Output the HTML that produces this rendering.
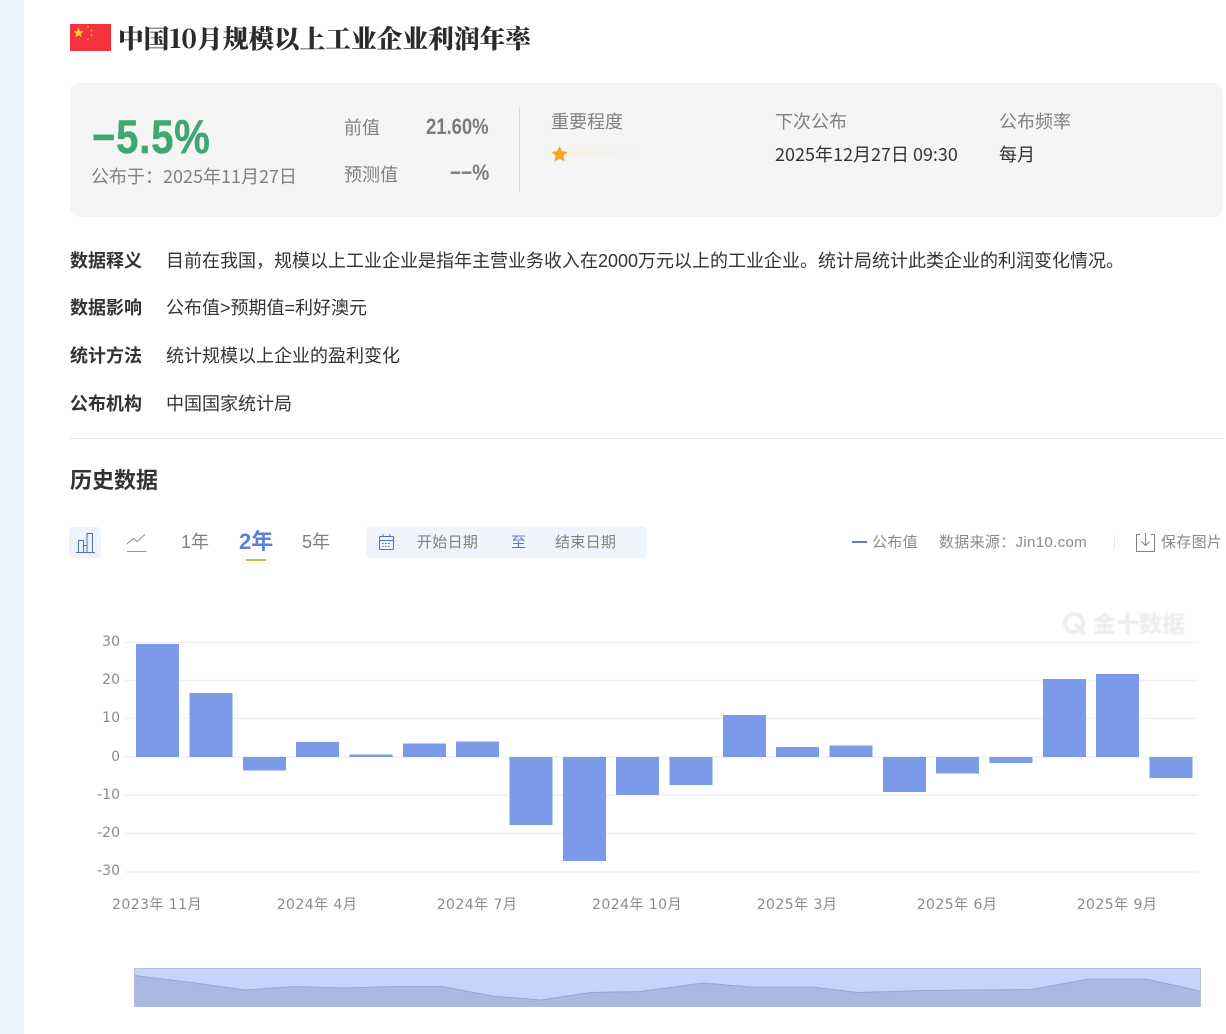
<!DOCTYPE html>
<html lang="zh"><head><meta charset="utf-8"><title>中国10月规模以上工业企业利润年率</title>
<style>
html,body{margin:0;padding:0;background:#fff}
body{width:1226px;height:1034px;position:relative;overflow:hidden;font-family:"Liberation Sans","Noto Sans CJK SC",sans-serif;color:#333}
.a{position:absolute;white-space:nowrap;line-height:1}
.b{font-family:"Noto Sans CJK SC",sans-serif}
.lab{left:70px;font-size:18px;font-weight:700;color:#333;font-family:"Noto Sans CJK SC",sans-serif}
.val{left:166px;font-size:18px;color:#333;font-weight:400;letter-spacing:0}
.g{color:#808080}
.t{font-size:15px;line-height:18px;color:#8a8a90;letter-spacing:.3px}
</style></head><body>
<div class="a" style="left:0;top:0;width:24px;height:1034px;background:#e8f4fa"></div>

<svg class="a" style="left:70px;top:24px" width="41" height="27" viewBox="0 0 41 27"><rect width="41" height="27" fill="#f5333f"/><polygon points="8.500,3.500 9.800,7.200 13.700,7.300 10.600,9.600 11.700,13.400 8.500,11.200 5.300,13.400 6.400,9.600 3.300,7.300 7.200,7.200" fill="#fdd835"/><circle cx="18" cy="3" r="1" fill="#f59e4a"/><circle cx="21.500" cy="6.500" r="1" fill="#f59e4a"/><circle cx="21.500" cy="11" r="1" fill="#f59e4a"/><circle cx="18" cy="15.500" r="1" fill="#f59e4a"/></svg>
<div class="a" style="left:118px;top:24px;font-family:'Noto Serif CJK SC',serif;font-weight:900;font-size:25.700px;line-height:28px;color:#2b2b2b">中国10月规模以上工业企业利润年率</div>

<div class="a" style="left:70px;top:83px;width:1153px;height:134px;background:#f5f5f5;border-radius:10px"></div>
<div class="a" style="left:92px;top:113px;font-size:47px;font-weight:700;color:#3fa772;transform:scaleX(.85);transform-origin:0 0;letter-spacing:1px;-webkit-text-stroke:.5px #3fa772">−5.5%</div>
<div class="a b g" style="left:91px;top:166px;font-size:18px;line-height:20px">公布于：2025年11月27日</div>
<div class="a b g" style="left:344px;top:117px;font-size:18px;line-height:20px">前值</div>
<div class="a" style="right:737px;top:116px;font-size:22px;font-weight:700;color:#7b7b7b;transform:scaleX(.84);transform-origin:100% 0">21.60%</div>
<div class="a b g" style="left:344px;top:164px;font-size:18px;line-height:20px">预测值</div>
<div class="a" style="right:737px;top:162px;font-size:22px;font-weight:700;color:#7b7b7b;transform:scaleX(.87);transform-origin:100% 0">−−%</div>
<div class="a" style="left:519px;top:107px;width:1px;height:85px;background:#d9d9d9"></div>
<div class="a b g" style="left:551px;top:111px;font-size:18px;line-height:20px">重要程度</div>
<div class="a" style="left:559px;top:151px;width:85px;height:5px;background:linear-gradient(90deg,#fbeedd,#f5f5f5)"></div>
<svg class="a" style="left:551px;top:146px" width="17" height="16" viewBox="0 0 17 16"><polygon points="8.500,0 10.900,5.200 16.500,5.900 12.400,9.800 13.500,15.500 8.500,12.700 3.500,15.500 4.600,9.800 .5,5.900 6.100,5.200" fill="#f5a623"/></svg>
<div class="a b g" style="left:775px;top:111px;font-size:18px;line-height:20px">下次公布</div>
<div class="a b" style="left:775px;top:144px;font-size:18px;line-height:20px;color:#333">2025年12月27日 09:30</div>
<div class="a b g" style="left:999px;top:111px;font-size:18px;line-height:20px">公布频率</div>
<div class="a b" style="left:999px;top:144px;font-size:18px;line-height:20px;color:#333">每月</div>

<div class="a lab" style="top:250px;line-height:20px">数据释义</div>
<div class="a val" style="top:251px;line-height:20px">目前在我国，规模以上工业企业是指年主营业务收入在2000万元以上的工业企业。统计局统计此类企业的利润变化情况。</div>
<div class="a lab" style="top:297px;line-height:20px">数据影响</div>
<div class="a val" style="top:298px;line-height:20px">公布值&gt;预期值=利好澳元</div>
<div class="a lab" style="top:345px;line-height:20px">统计方法</div>
<div class="a val" style="top:346px;line-height:20px">统计规模以上企业的盈利变化</div>
<div class="a lab" style="top:393px;line-height:20px">公布机构</div>
<div class="a val" style="top:394px;line-height:20px">中国国家统计局</div>
<div class="a" style="left:70px;top:438px;width:1153px;height:1px;background:#e6e6e6"></div>
<div class="a" style="left:70px;top:466px;font-size:22px;line-height:26px;font-weight:700;color:#333;font-family:'Noto Sans CJK SC',sans-serif">历史数据</div>

<div class="a" style="left:69px;top:527px;width:32px;height:31px;background:#eef3fe;border-radius:4px"></div>
<svg class="a" style="left:75px;top:531px" width="22" height="23" viewBox="0 0 22 23" fill="none" stroke="#4f6fc4" stroke-width="1"><path d="M1 21.500H20M3.500 21V9.500H8.500V21M8.500 14.500H12V21M12 21V2.500H17.500V21"/></svg>
<svg class="a" style="left:126px;top:532px" width="22" height="22" viewBox="0 0 22 22" fill="none" stroke="#8a8a8a" stroke-width="1"><path d="M1 12L7.500 6.500L11 9.500L19 2.500" /><path d="M1 19.500H20.500" stroke="#999"/></svg>
<div class="a" style="left:181px;top:532px;font-size:18px;line-height:20px;color:#808080">1年</div>
<div class="a" style="left:239px;top:530px;font-size:22px;line-height:24px;font-weight:700;color:#5a7fdc">2年</div>
<div class="a" style="left:246px;top:559px;width:20px;height:2px;background:#e8a93c"></div>
<div class="a" style="left:302px;top:532px;font-size:18px;line-height:20px;color:#808080">5年</div>
<div class="a" style="left:366px;top:526px;width:281px;height:32px;background:#f0f4fe;border-radius:5px"></div>
<svg class="a" style="left:378px;top:533px" width="17" height="18" viewBox="0 0 17 18" fill="none" stroke="#4f6fc4"><rect x="1.500" y="3.500" width="14" height="13" rx="1"/><path d="M1.500 7.500H15.500M5 1V4M12 1V4"/><path d="M4 10.500H13M4 13.500H13" stroke-dasharray="1.500 1.500"/></svg>
<div class="a t" style="left:417px;top:534px;color:#808080">开始日期</div>
<div class="a t" style="left:511px;top:534px;color:#5b78c8">至</div>
<div class="a t" style="left:555px;top:534px;color:#808080">结束日期</div>

<div class="a" style="left:852px;top:541px;width:15px;height:2px;background:#5b7fc0"></div>
<div class="a t" style="left:872px;top:534px">公布值</div>
<div class="a t" style="left:939px;top:534px">数据来源：<span style="letter-spacing:.35px">Jin10.com</span></div>
<div class="a" style="left:1114px;top:535px;width:1px;height:15px;background:#e8e8e8"></div>
<svg class="a" style="left:1135px;top:532px" width="21" height="21" viewBox="0 0 21 21" fill="none" stroke="#808080"><path d="M5 2.500H1.500V19.500H19.500V2.500H16M10.500 1V13M6.500 9.500L10.500 13.500L14.500 9.500"/></svg>
<div class="a t" style="left:1161px;top:534px">保存图片</div>

<svg class="a" style="left:0;top:600px" width="1226" height="434" viewBox="0 600 1226 434">
<g stroke="#f0f1f4" stroke-width="1.500"><path d="M125 642.500H1198M125 680.500H1198M125 718.500H1198M125 757H1198M125 795H1198M125 833.500H1198M125 872H1198"/></g>
<g fill="#7b9bea">
<rect x="136" y="644" width="43" height="113"/>
<rect x="189.500" y="693" width="43" height="64"/>
<rect x="243" y="757" width="43" height="13.500"/>
<rect x="296" y="742" width="43" height="15"/>
<rect x="349.500" y="754.500" width="43" height="2.500"/>
<rect x="403" y="743.500" width="43" height="13.500"/>
<rect x="456" y="741.500" width="43" height="15.500"/>
<rect x="509.500" y="757" width="43" height="68"/>
<rect x="563" y="757" width="43" height="104"/>
<rect x="616" y="757" width="43" height="38"/>
<rect x="669.500" y="757" width="43" height="28"/>
<rect x="723" y="715" width="43" height="42"/>
<rect x="776" y="747" width="43" height="10"/>
<rect x="829.500" y="745.500" width="43" height="11.500"/>
<rect x="883" y="757" width="43" height="35"/>
<rect x="936" y="757" width="43" height="16.500"/>
<rect x="989.500" y="757" width="43" height="6"/>
<rect x="1043" y="679" width="43" height="78"/>
<rect x="1096" y="674" width="43" height="83"/>
<rect x="1149.500" y="757" width="43" height="21"/>
</g>
<g fill="#8a8a90" font-family="DejaVu Sans,Noto Sans CJK SC,sans-serif" font-size="14" text-anchor="end">
<text x="120" y="646">30</text><text x="120" y="684">20</text><text x="120" y="722">10</text><text x="120" y="761">0</text><text x="120" y="799">-10</text><text x="120" y="837">-20</text><text x="120" y="875">-30</text>
</g>
<g fill="#8a8a90" font-family="DejaVu Sans,Noto Sans CJK SC,sans-serif" font-size="14" text-anchor="middle" letter-spacing=".45">
<text x="157" y="909">2023年 11月</text><text x="317" y="909">2024年 4月</text><text x="477" y="909">2024年 7月</text><text x="637" y="909">2024年 10月</text><text x="797" y="909">2025年 3月</text><text x="957" y="909">2025年 6月</text><text x="1117" y="909">2025年 9月</text>
</g>
<g opacity=".9" style="filter:blur(.5px)"><circle cx="1074" cy="623" r="9" fill="none" stroke="#ececec" stroke-width="4"/><path d="M1075 624L1085 634" stroke="#ececec" stroke-width="4"/>
<text x="1093" y="632" font-family="Noto Sans CJK SC,sans-serif" font-weight="900" font-size="23" fill="#ececec">金十数据</text></g>
<rect x="134.500" y="968.500" width="1066" height="38" fill="#c5d4fa" stroke="#b7c0de"/>
<path d="M135 975.500L146 977L195 983L245 990L294 986.500L344 988L393 986.500L442 986.500L492 996L541 1000L591 992.500L640 991.500L703 983L750 987L812 987L858 992.500L925 990.500L1032 989.500L1089 979L1146 979L1200 991V1006.500H135Z" fill="#aab9e3" stroke="none"/>
<path d="M135 975.500L146 977L195 983L245 990L294 986.500L344 988L393 986.500L442 986.500L492 996L541 1000L591 992.500L640 991.500L703 983L750 987L812 987L858 992.500L925 990.500L1032 989.500L1089 979L1146 979L1200 991" fill="none" stroke="#97a6cf"/>
</svg>
</body></html>
